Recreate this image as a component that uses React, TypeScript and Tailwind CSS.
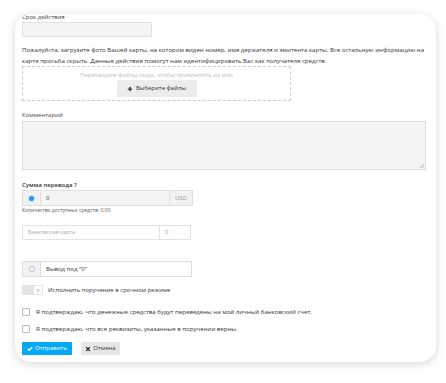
import { Check, Plus, X } from 'lucide-react';

const font = { fontFamily: '"Open Sans", "Liberation Sans", sans-serif' };

function Label({ children, className = '' }: { children: React.ReactNode; className?: string }) {
  return <div className={`text-[6px] leading-[9px] text-[#444] ${className}`}>{children}</div>;
}

function CheckRow({ text, className = '' }: { text: string; className?: string }) {
  return (
    <div className={`flex items-center gap-[6px] ${className}`}>
      <div className="w-[8px] h-[8px] border border-[#bbb] rounded-[1px] bg-white" />
      <span className="text-[6.1px] leading-[8px] text-[#333]">{text}</span>
    </div>
  );
}

export default function App() {
  return (
    <div className="w-[446px] h-[383px] bg-white pt-[14px] pl-[15px] overflow-hidden" style={font}>
      <div className="w-[421px] h-[348px] rounded-[16px] bg-white shadow-[0_2px_10px_rgba(0,0,0,0.16)] overflow-hidden px-[7px] flex flex-col">
        <Label className="-mt-[1px]">Срок действия</Label>
        <div className="w-[130px] h-[15px] bg-[#f5f5f5] border border-[#e2e2e2]" />

        <p className="mt-[7px] w-[406px] text-[6.1px] leading-[11px] text-[#333]">
          Пожалуйста, загрузите фото Вашей карты, на котором виден номер, имя держателя и эмитента карты. Все остальную информацию на
          карте просьба скрыть. Данные действия помогут нам идентифицировать Вас как получателя средств.
        </p>

        <div className="w-[269px] h-[35px] border border-dashed border-[#ccc] flex flex-col items-center pt-[4px]">
          <div className="text-[6px] leading-[8px] text-[#bbb]">Перетащите файлы сюда, чтобы прикрепить их или</div>
          <div className="mt-[1px] w-[80px] h-[17px] bg-[#ececec] rounded-[1px] flex items-center justify-center gap-[3px] text-[6px] text-[#333]">
            <Plus size={6} strokeWidth={5} />
            <span>Выберите файлы</span>
          </div>
        </div>

        <Label className="mt-[10px]">Комментарий</Label>
        <div className="mt-[1px] w-[404px] h-[49px] bg-[#f5f5f5] border border-[#dcdcdc] relative">
          <svg className="absolute right-[1px] bottom-[1px]" width="5" height="5" viewBox="0 0 5 5">
            <path d="M1 5 L5 1 M3 5 L5 3" stroke="#999" strokeWidth="0.6" />
          </svg>
        </div>

        <div className="mt-[11px] text-[6px] leading-[9px] text-[#333] font-semibold">Сумма перевода ?</div>
        <div className="w-[171px] h-[16px] flex border border-[#e0e0e0]">
          <div className="w-[18px] bg-[#f2f2f2] border-r border-[#e0e0e0] flex items-center justify-center">
            <div className="w-[5px] h-[5px] rounded-full bg-[#2196f3] ring-1 ring-[#cfe4fb]" />
          </div>
          <div className="flex-1 bg-[#f5f5f5] text-[6px] text-[#333] flex items-center pl-[5px]">0</div>
          <div className="w-[23px] bg-[#f2f2f2] border-l border-[#e0e0e0] text-[6px] text-[#999] flex items-center justify-center">USD</div>
        </div>
        <div className="mt-[1px] text-[5px] leading-[7px] text-[#555]">Количество доступных средств: 0,00</div>

        <div className="mt-[11px] w-[169px] h-[15px] flex border border-[#e3e3e3]">
          <div className="flex-1 bg-white text-[5.5px] text-[#aaa] flex items-center pl-[5px]">Банковская карта</div>
          <div className="w-[31px] bg-white border-l border-[#e3e3e3] text-[6px] text-[#999] flex items-center pl-[5px]">0</div>
        </div>

        <div className="mt-[21px] w-[170px] h-[16px] flex border border-[#ddd]">
          <div className="w-[18px] bg-[#f2f2f2] border-r border-[#ddd] flex items-center justify-center">
            <div className="w-[6px] h-[6px] rounded-full border border-[#bbb] bg-white" />
          </div>
          <div className="flex-1 bg-white text-[6px] text-[#333] flex items-center pl-[5px]">Вывод под "0"</div>
        </div>

        <div className="mt-[8px] flex items-center gap-[5px]">
          <div className="w-[21px] h-[10px] bg-[#e4e4e4] flex justify-end p-[1px]">
            <div className="w-[8px] h-[8px] bg-white text-[5px] leading-[8px] text-center text-[#999]">o</div>
          </div>
          <span className="text-[6px] leading-[8px] text-[#333]">Исполнить поручение в срочном режиме</span>
        </div>

        <CheckRow className="mt-[13px]" text="Я подтверждаю, что денежные средства будут переведены на мой личный банковский счет." />
        <CheckRow className="mt-[9px]" text="Я подтверждаю, что все реквизиты, указанные в поручении верны." />

        <div className="mt-[9px] flex gap-[9px]">
          <div className="w-[50px] h-[13px] bg-[#03a9f4] text-white text-[6px] flex items-center justify-center gap-[2px] rounded-[1px]">
            <Check size={6} strokeWidth={5} />
            <span>Отправить</span>
          </div>
          <div className="w-[39px] h-[13px] bg-[#e6e6e6] text-[#333] text-[6px] flex items-center justify-center gap-[2px] rounded-[1px]">
            <X size={6} strokeWidth={5} />
            <span>Отмена</span>
          </div>
        </div>
      </div>
    </div>
  );
}
